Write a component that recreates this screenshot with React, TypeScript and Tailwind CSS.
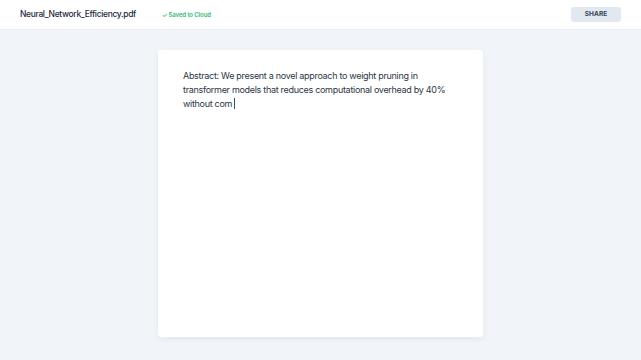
export default function App() {
  return (
    <div className="min-h-screen bg-[#f1f5f9] font-['Inter',sans-serif] text-[#1e293b]">
      <header className="h-[30px] bg-white border-b border-[#e8edf2] flex items-center justify-between pl-5 pr-5">
        <div className="flex items-center gap-[26px]">
          <span className="text-[8.5px] font-medium tracking-[-0.35px]">Neural_Network_Efficiency.pdf</span>
          <span className="text-[6px] font-semibold text-[#34b87a] tracking-[-0.1px]">✓ Saved to Cloud</span>
        </div>
        <button className="w-[50px] h-[15px] rounded-[3px] bg-[#e2e8f0] text-[6.5px] font-bold text-[#334155] tracking-[0.1px]">
          SHARE
        </button>
      </header>
      <main className="flex justify-center pt-5">
        <div className="w-[325px] h-[287px] bg-white rounded-[3px] shadow-[0_2px_6px_rgba(15,23,42,0.06)] px-[25px] pt-[19px]">
          <p className="text-[9px] leading-[14px] tracking-[-0.3px] text-[#2b3645]">
            Abstract: We present a novel approach to weight pruning in transformer models that reduces computational overhead by 40% without com
            <span className="inline-block w-px h-[11px] bg-[#1e5a7a] align-[-2px] ml-[2px]" />
          </p>
        </div>
      </main>
    </div>
  );
}
